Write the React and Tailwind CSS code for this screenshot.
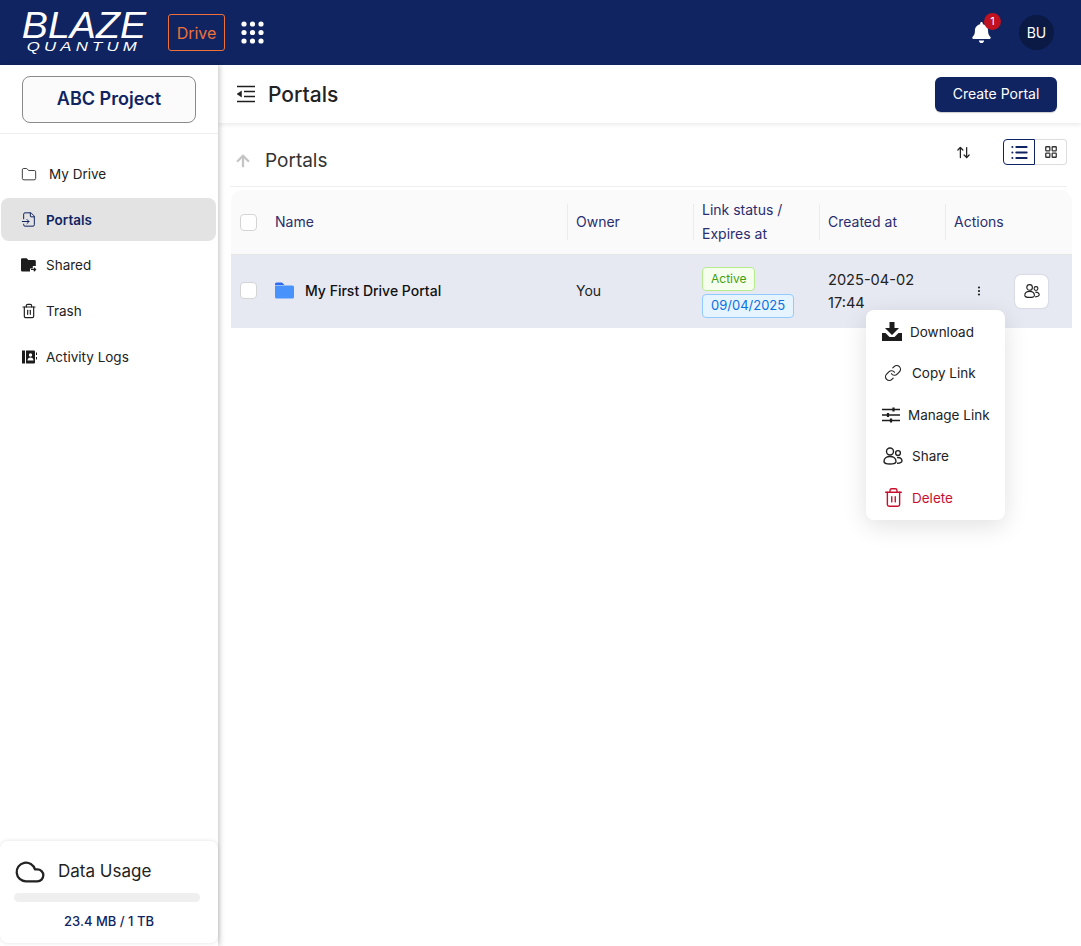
import { ArrowUp, ArrowUpDown, Cloud, EllipsisVertical, FileInput, Folder, LayoutGrid, Link, List, Trash2 } from 'lucide-react'
import { FaBell } from 'react-icons/fa'

const NAVY = 'text-[#0f2461]'

function DotsIcon() {
  const dots = []
  for (let y = 0; y < 3; y++) {
    for (let x = 0; x < 3; x++) {
      dots.push(<circle key={`${x}-${y}`} cx={3 + x * 8.5} cy={3 + y * 8.5} r="2.6" fill="#fff" />)
    }
  }
  return <svg width="23" height="23" viewBox="0 0 23 23">{dots}</svg>
}

function CollapseIcon() {
  return (
    <svg width="20" height="18" viewBox="0 0 20 18" fill="none" stroke="#1f1f1f" strokeWidth="1.5">
      <path d="M1 1.5h18M8 6.5h11M8 11.5h11M1 16.5h18" />
      <path d="M5.5 6v6L1 9z" fill="#1f1f1f" strokeWidth="0.5" />
    </svg>
  )
}

function SharedIcon() {
  return (
    <svg width="16" height="14" viewBox="0 0 16 14">
      <path d="M0 1.5A1.3 1.3 0 0 1 1.3.2h4.4l1.6 1.7h6.2A1.3 1.3 0 0 1 14.8 3.2V8h-3v2.5H9V13.5H1.3A1.3 1.3 0 0 1 0 12.2z" fill="#1c1c1c" />
      <path d="M10 11.5h4M12.8 9.8l1.8 1.7-1.8 1.7" fill="none" stroke="#1c1c1c" strokeWidth="1.2" />
    </svg>
  )
}

function LogsIcon() {
  return (
    <svg width="15" height="14" viewBox="0 0 15 14">
      <rect x="0" y="0.5" width="3" height="13" fill="#1c1c1c" />
      <path d="M4 .5h8a1 1 0 0 1 1 1v11a1 1 0 0 1-1 1H4z" fill="#1c1c1c" />
      <circle cx="8.5" cy="5" r="1.7" fill="#fff" />
      <path d="M5.5 10.5c0-2 1.4-3 3-3s3 1 3 3z" fill="#fff" />
      <path d="M14 2.5h1v2.5h-1zM14 7h1v2.5h-1z" fill="#1c1c1c" />
    </svg>
  )
}

function PeopleIcon({ size = 16 }) {
  return (
    <svg width={size} height={size} viewBox="0 0 20 18" fill="none" stroke="#222" strokeWidth="1.4">
      <circle cx="7" cy="4.5" r="3.5" />
      <circle cx="15" cy="6" r="2.4" />
      <path d="M1 14.5c0-3.2 2.7-5 6-5s6 1.8 6 5c0 1.5-2.5 2.5-6 2.5s-6-1-6-2.5z" />
      <path d="M14 10.5c2.8-.4 5 1 5 3.3 0 1.5-1.7 2.4-5 2.5" />
    </svg>
  )
}

function DownloadIcon() {
  return (
    <svg width="20" height="19" viewBox="0 0 20 19" fill="#1c1c1c">
      <path d="M7.5 0h5v6H17l-7 7-7-7h4.500z" />
      <path d="M0 11h3.500l4 4h5l4-4H20v8H0z" />
    </svg>
  )
}

function SlidersIcon() {
  return (
    <svg width="18" height="16" viewBox="0 0 18 16" fill="none" stroke="#1c1c1c" strokeWidth="1.6">
      <path d="M0 2.500h18M0 8h18M0 13.500h18" />
      <path d="M11.500 .5v4M6 6v4M9 11.500v4" strokeWidth="2.200" />
    </svg>
  )
}

function NavItem({ icon, label, active, gap = 'gap-[9px]' }) {
  return (
    <div className={`flex h-[43px] items-center rounded-lg pl-[20px] pt-[1px] text-[13.5px] ${gap} ${active ? `bg-[#e3e3e3] font-semibold ${NAVY}` : 'text-[#222]'}`}>
      <span className="flex w-[16px] shrink-0 justify-center">{icon}</span>
      <span>{label}</span>
    </div>
  )
}

function MenuItem({ icon, label, gap, red, pad = 'pl-[17px]' }) {
  return (
    <div className={`flex h-[41.500px] items-center text-[13.5px] ${pad} ${gap} ${red ? 'text-[#c8102e]' : 'text-[#222]'}`}>
      {icon}
      <span>{label}</span>
    </div>
  )
}

function HeaderCell({ children }) {
  return (
    <div className="flex h-[36px] items-center border-l border-[#ececec] pl-[8px] text-sm leading-[24px] text-[#2b2d6e]">
      <span>{children}</span>
    </div>
  )
}

export default function App() {
  return (
    <div className="flex h-screen w-full flex-col overflow-hidden bg-white font-['Inter',sans-serif]">
      <header className="flex h-[65px] shrink-0 items-center justify-between bg-[#0f2461] pl-[22px] pr-[27px]">
        <div className="flex items-center">
          <div className="flex w-[124px] flex-col items-center text-white font-['Liberation_Sans',sans-serif] italic">
            <span className="scale-x-[1.09] text-[36px] leading-[28px]">BLAZE</span>
            <span className="mt-[1px] scale-x-[1.4] text-[12px] leading-[12px] tracking-[3px]">QUANTUM</span>
          </div>
          <div className="ml-[22px] flex h-[37px] w-[57px] items-center justify-center rounded-[3px] border border-[#f0703a] text-base text-[#f0703a]">Drive</div>
          <div className="ml-[16px] flex"><DotsIcon /></div>
        </div>
        <div className="flex items-center gap-[27px]">
          <div className="relative">
            <FaBell className="text-white" size={21} />
            <span className="absolute -right-[9px] -top-[9px] flex h-[17px] w-[17px] items-center justify-center rounded-full bg-[#c0121f] text-[11px] text-white">1</span>
          </div>
          <div className="flex h-[35px] w-[35px] items-center justify-center rounded-full bg-[#0a1a45] text-sm text-white">BU</div>
        </div>
      </header>

      <div className="flex min-h-0 flex-1">
        <aside className="relative z-10 flex w-[218px] shrink-0 flex-col bg-white shadow-[2px_0_5px_rgba(0,0,0,0.2)]">
          <div className="flex h-[69px] items-center justify-center border-b border-[#eeeeee]">
            <div className={`flex h-[47px] w-[174px] items-center justify-center rounded-lg border border-[#8a8a8a] bg-[#fbfbfb] text-lg font-semibold ${NAVY}`}>ABC Project</div>
          </div>
          <nav className="mt-[18px] flex flex-col gap-[2.700px] pl-[1px] pr-[2px]">
            <NavItem icon={<Folder size={17} strokeWidth={1.3} />} label="My Drive" gap="gap-[12px]" />
            <NavItem icon={<FileInput size={17} strokeWidth={1.5} />} label="Portals" active />
            <NavItem icon={<SharedIcon />} label="Shared" />
            <NavItem icon={<Trash2 size={16} strokeWidth={1.8} />} label="Trash" />
            <NavItem icon={<LogsIcon />} label="Activity Logs" />
          </nav>
          <div className="mt-auto mb-[3px] flex h-[102px] flex-col rounded-lg bg-white px-[14px] pt-[15px] shadow-[0_0_4px_rgba(0,0,0,0.12)]">
            <div className="flex items-center gap-[12px] text-[17px] text-[#222]">
              <Cloud size={32} strokeWidth={1.7} />
              <span>Data Usage</span>
            </div>
            <div className="mt-[5px] h-[9px] w-[186px] rounded-full bg-[#efefef]" />
            <div className={`mt-[10px] text-center text-[13px] font-medium ${NAVY}`}>23.4 MB / 1 TB</div>
          </div>
        </aside>

        <main className="flex min-w-0 flex-1 flex-col">
          <div className="flex h-[58px] shrink-0 items-center justify-between pl-[18px] pr-[24px] shadow-[0_2px_4px_rgba(0,0,0,0.08)]">
            <div className="flex items-center gap-[12px]">
              <CollapseIcon />
              <h1 className="mt-[1px] text-[21px] font-medium text-[#222]">Portals</h1>
            </div>
            <button className="h-[35px] w-[122px] rounded-md bg-[#0f2461] text-sm text-white shadow-[0_1px_1px_rgba(0,0,0,0.2)]">Create Portal</button>
          </div>

          <div className="ml-[12px] mr-[14px] flex h-[64px] shrink-0 items-start justify-between border-b border-[#eeeeee]">
            <div className="mt-[24px] flex items-center gap-[13px] pl-[4px]">
              <ArrowUp size={18} strokeWidth={3} className="text-[#c4c4c4]" />
              <span className="text-[19px] text-[#333]">Portals</span>
            </div>
            <div className="mt-[16px] flex items-center">
              <ArrowUpDown size={15} strokeWidth={2} className="mr-[32px] text-[#222]" />
              <div className="flex h-[26px]">
                <span className="flex w-[32px] items-center justify-center rounded-l-[4px] border border-[#0f2461] text-[#0f2461]"><List size={19} strokeWidth={2.6} /></span>
                <span className="flex w-[32px] items-center justify-center rounded-r-[4px] border border-l-0 border-[#dddddd] text-[#333]"><LayoutGrid size={14} strokeWidth={2.2} /></span>
              </div>
            </div>
          </div>

          <div className="relative ml-[13px] mr-[9px] mt-[3px]">
            <div className="grid h-[65px] grid-cols-[336px_126px_126px_126px_1fr] items-center rounded-t-xl border-b border-[#e6e6e6] bg-[#fafafa]">
              <div className="flex items-center">
                <span className="ml-[9px] h-[17px] w-[17px] rounded-[4px] border border-[#d4d4d4] bg-white" />
                <span className="ml-[18px] text-sm text-[#2b2d6e]">Name</span>
              </div>
              <HeaderCell>Owner</HeaderCell>
              <HeaderCell>Link status /<br />Expires at</HeaderCell>
              <HeaderCell>Created at</HeaderCell>
              <HeaderCell>Actions</HeaderCell>
            </div>
            <div className="grid h-[73px] grid-cols-[336px_126px_126px_126px_1fr] items-center bg-[#e6e9f2] text-sm">
              <div className="mb-[2px] flex items-center">
                <span className="ml-[9px] h-[17px] w-[17px] rounded-[4px] border border-[#d4d4d4] bg-white" />
                <svg className="ml-[18px]" width="19" height="17" viewBox="0 0 19 17">
                  <path d="M0 2a1.500 1.500 0 0 1 1.500-1.500h5.500L9.500 3H0z" fill="#2f6bf0" />
                  <path d="M0 3.500h17.500A1.500 1.500 0 0 1 19 5v10a1.500 1.500 0 0 1-1.500 1.500h-16A1.500 1.500 0 0 1 0 15z" fill="#4793fb" />
                </svg>
                <span className="ml-[11px] font-medium text-[#111]">My First Drive Portal</span>
              </div>
              <div className="mb-[2px] pl-[9px] text-[#222]">You</div>
              <div className="mt-[1px] flex flex-col items-start gap-[3px] pl-[9px]">
                <span className="flex h-[24px] items-center rounded-[4px] border border-[#b7eb8f] bg-[#f6ffed] px-[8px] text-[12px] text-[#3fa010]">Active</span>
                <span className="flex h-[24px] items-center rounded-[4px] border border-[#91caff] bg-[#e6f4ff] px-[8px] text-[13px] text-[#0a6fe0]">09/04/2025</span>
              </div>
              <div className="pl-[9px] text-[14.600px] leading-[23px] text-[#222]">2025-04-02<br />17:44</div>
              <div className="mb-[1px] flex items-center pl-[28px]">
                <EllipsisVertical size={12} strokeWidth={2.4} className="text-[#222]" />
                <span className="ml-[30px] flex h-[33px] w-[33px] items-center justify-center rounded-md bg-white shadow-[0_0_2px_rgba(0,0,0,0.2)]"><PeopleIcon /></span>
              </div>
            </div>

            <div className="absolute left-[635px] top-[120px] z-20 w-[139px] rounded-lg bg-white py-[1px] shadow-[0_6px_24px_rgba(0,0,0,0.12)]">
              <MenuItem icon={<DownloadIcon />} label="Download" gap="gap-[8px]" pad="pl-[16px]" />
              <MenuItem icon={<Link size={18} strokeWidth={1.6} />} label="Copy Link" gap="gap-[10px]" pad="pl-[18px]" />
              <MenuItem icon={<SlidersIcon />} label="Manage Link" gap="gap-[8px]" pad="pl-[16px]" />
              <MenuItem icon={<PeopleIcon size={20} />} label="Share" gap="gap-[9px]" />
              <MenuItem icon={<Trash2 size={21} strokeWidth={1.6} />} label="Delete" gap="gap-[8px]" red />
            </div>
          </div>
        </main>
      </div>
    </div>
  )
}
